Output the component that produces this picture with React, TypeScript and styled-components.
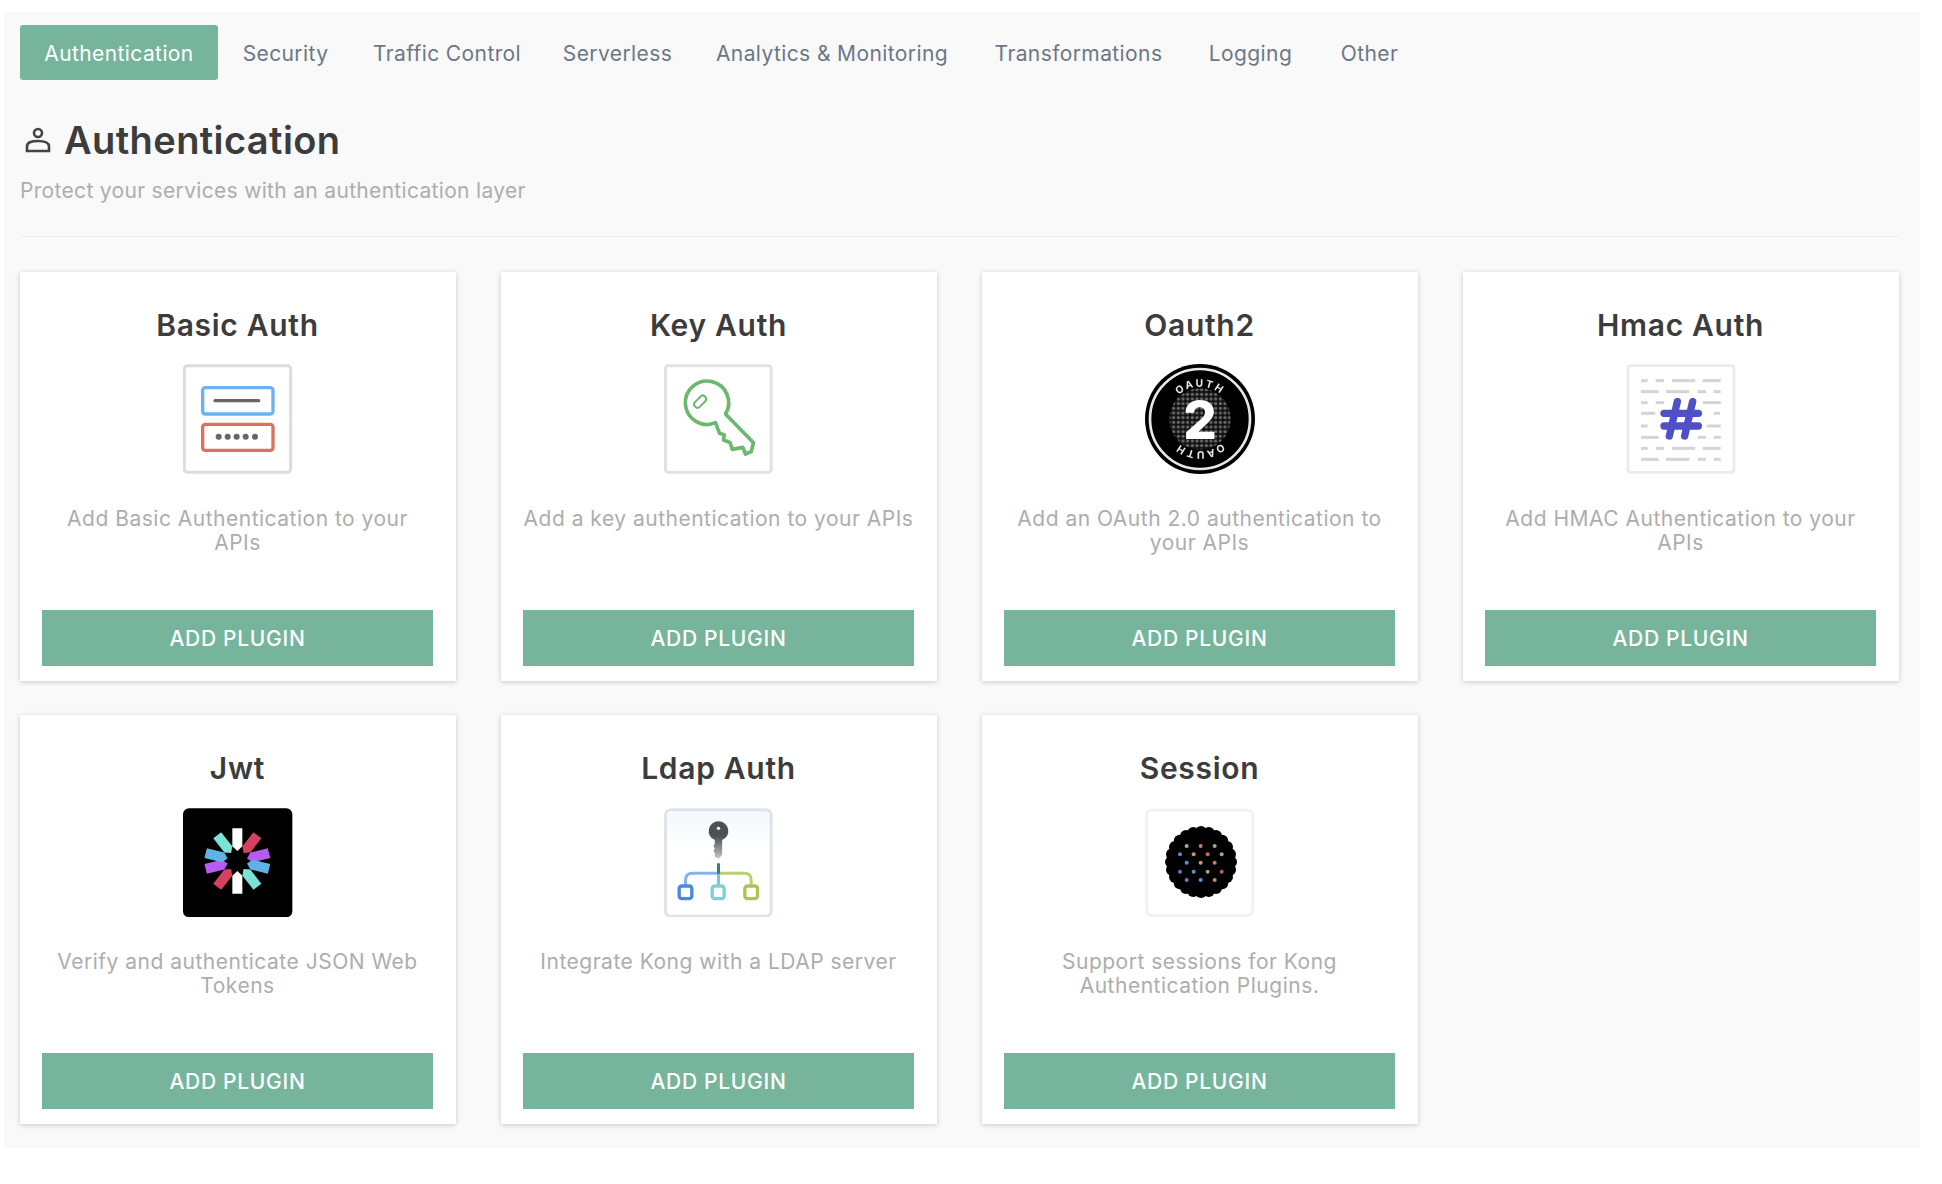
import { ReactNode } from 'react';
import styled, { createGlobalStyle } from 'styled-components';

const GlobalStyle = createGlobalStyle`
  html, body {
    margin: 0;
    background: #fff;
    font-family: Inter, "Liberation Sans", sans-serif;
  }
`;

const tabs = [
  { label: 'Authentication', width: 198 },
  { label: 'Security', width: 127 },
  { label: 'Traffic Control', width: 188 },
  { label: 'Serverless', width: 145 },
  { label: 'Analytics & Monitoring', width: 276 },
  { label: 'Transformations', width: 209 },
  { label: 'Logging', width: 127 },
  { label: 'Other', width: 103 },
];

// icons are drawn in coordinates taken straight off the reference crops
const IconBox = ({ x, y, children }: { x: number; y: number; children: ReactNode }) => (
  <IconSvg viewBox={`${x} ${y} 330 330`}>{children}</IconSvg>
);

const BasicIcon = () => (
  <IconBox x={69} y={42}>
    <rect x="73" y="47" width="319" height="320" rx="10" fill="#fff" stroke="#dcdcdc" strokeWidth="9" />
    <rect x="128" y="113" width="211" height="79" rx="8" fill="#fff" stroke="#6fb1ee" strokeWidth="10" />
    <rect x="128" y="223" width="211" height="78" rx="8" fill="#fff" stroke="#d9735f" strokeWidth="10" />
    <line x1="165" y1="152" x2="296" y2="152" stroke="#666" strokeWidth="10" strokeLinecap="round" />
    {[176, 203, 230, 257, 285].map(cx => <circle key={cx} cx={cx} cy="260" r="9" fill="#666" />)}
  </IconBox>
);

const KeyIcon = () => (
  <IconBox x={73.5} y={42}>
    <rect x="78" y="47" width="317" height="320" rx="8" fill="#fff" stroke="#e2e2e2" strokeWidth="9" />
    <path
      d="M258 192 A65 65 0 1 0 228 218 L240 250 L254 254 L252 270 L272 278 L278 298 L310 292 L318 312 L335 305 L342 278 Z"
      fill="#fff"
      stroke="#6cb86e"
      strokeWidth="11"
      strokeLinejoin="round"
    />
    <rect x="161" y="145" width="42" height="20" rx="9" transform="rotate(-45 182 155)" fill="#fff" stroke="#6cb86e" strokeWidth="6" />
  </IconBox>
);

const OauthIcon = () => (
  <IconBox x={75} y={42}>
    <defs>
      <pattern id="oauthDots" width="14" height="14" patternUnits="userSpaceOnUse">
        <rect width="14" height="14" fill="#111" />
        <circle cx="7" cy="7" r="5" fill="#666" />
      </pattern>
      <path id="oauthArc" d="M143 207 A97 97 0 0 1 337 207" />
    </defs>
    <circle cx="240" cy="207" r="165" fill="#000" />
    <circle cx="240" cy="207" r="150" fill="none" stroke="#e8e8e8" strokeWidth="8" />
    <circle cx="240" cy="207" r="92" fill="url(#oauthDots)" />
    <OauthLabel textAnchor="middle">
      <textPath href="#oauthArc" startOffset="50%">OAUTH</textPath>
    </OauthLabel>
    <OauthLabel textAnchor="middle" transform="rotate(180 240 207)">
      <textPath href="#oauthArc" startOffset="50%">OAUTH</textPath>
    </OauthLabel>
    <OauthTwo x="240" y="268" textAnchor="middle">2</OauthTwo>
  </IconBox>
);

const hmacRows: [number, number[][]][] = [
  [92, [[123, 143], [167, 192], [216, 286], [308, 362]]],
  [125, [[123, 176], [198, 268], [293, 318], [341, 362]]],
  [158, [[123, 143], [167, 192], [308, 362]]],
  [190, [[123, 166], [341, 360]]],
  [228, [[123, 143], [320, 362]]],
  [262, [[123, 176], [293, 318], [341, 362]]],
  [295, [[123, 143], [167, 192], [216, 286], [308, 362]]],
  [328, [[123, 176], [198, 268], [293, 318], [341, 362]]],
];

const HmacIcon = () => (
  <IconBox x={78} y={42}>
    <rect x="84" y="47" width="318" height="320" rx="9" fill="#fff" stroke="#ebebeb" strokeWidth="8" />
    {hmacRows.map(([y, segments]) =>
      segments.map(([a, b]) => <line key={`${y}-${a}`} x1={a} y1={y} x2={b} y2={y} stroke="#d4d4d4" strokeWidth="9" />)
    )}
    <g stroke="#4f4fc6" strokeWidth="22" strokeLinecap="round">
      <line x1="232" y1="155" x2="208" y2="258" />
      <line x1="278" y1="155" x2="254" y2="258" />
      <line x1="192" y1="190" x2="295" y2="190" />
      <line x1="192" y1="228" x2="295" y2="228" />
    </g>
  </IconBox>
);

const jwtSpokes = [
  { angle: 0, color: '#ffffff' },
  { angle: 180, color: '#ffffff' },
  { angle: -38, color: '#7be3d3' },
  { angle: 142, color: '#7be3d3' },
  { angle: 38, color: '#d8405f' },
  { angle: 218, color: '#d8405f' },
  { angle: 76, color: '#b65cf0' },
  { angle: 256, color: '#b65cf0' },
  { angle: 104, color: '#62b1e6' },
  { angle: 284, color: '#62b1e6' },
];

const JwtIcon = () => (
  <IconBox x={69} y={33}>
    <rect x="69" y="37" width="328" height="327" rx="18" fill="#000" />
    {jwtSpokes.map(({ angle, color }) => (
      <polygon key={angle} points="-15,-98 15,-98 15,-44 0,-30 -15,-44" fill={color} transform={`translate(232 195) rotate(${angle})`} />
    ))}
  </IconBox>
);

const LdapIcon = () => (
  <IconBox x={73.5} y={33}>
    <defs>
      <linearGradient id="ldapBg" x1="0" y1="0" x2="0" y2="1">
        <stop offset="0" stopColor="#f4f8fc" />
        <stop offset="0.4" stopColor="#ffffff" />
      </linearGradient>
      <linearGradient id="ldapKey" x1="0" y1="0" x2="0" y2="1">
        <stop offset="0.4" stopColor="#4c5054" />
        <stop offset="1" stopColor="#c4c6c8" />
      </linearGradient>
    </defs>
    <rect x="78" y="41" width="317" height="320" rx="16" fill="url(#ldapBg)" stroke="#dfe4ea" strokeWidth="9" />
    <path
      d="M237 76 A29 29 0 0 1 248 132 V176 L238 188 L226 182 V172 L222 164 L226 158 L222 150 L226 142 V132 A29 29 0 0 1 237 76 Z"
      fill="url(#ldapKey)"
    />
    <circle cx="237" cy="97" r="5" fill="#fff" />
    <path d="M237 232 H160 Q138 232 138 252 V270" fill="none" stroke="#86b4ea" strokeWidth="9" />
    <path d="M237 232 H314 Q335 232 335 252 V270" fill="none" stroke="#b7d172" strokeWidth="9" />
    <line x1="237" y1="232" x2="237" y2="270" stroke="#79c9d4" strokeWidth="9" />
    <line x1="237" y1="202" x2="237" y2="234" stroke="#3f7b86" strokeWidth="9" />
    <rect x="119" y="270" width="38" height="38" rx="8" fill="#fff" stroke="#4b88e2" strokeWidth="10" />
    <rect x="218" y="270" width="36" height="38" rx="8" fill="#fff" stroke="#7dd0d8" strokeWidth="10" />
    <rect x="316" y="270" width="38" height="38" rx="8" fill="#fff" stroke="#a9c558" strokeWidth="10" />
  </IconBox>
);

const sessionDots: [number, number, string][] = [
  [200, 150, '#b8a97c'], [242, 150, '#c08270'], [284, 150, '#9cab82'],
  [180, 175, '#5a8ac2'], [221, 175, '#b2a272'], [263, 175, '#c26c72'], [305, 175, '#a2aa82'],
  [200, 200, '#5a90d2'], [242, 200, '#c2a262'], [284, 200, '#d27272'],
  [180, 227, '#7a72b2'], [221, 227, '#5a90d2'], [263, 227, '#b2a262'], [305, 227, '#b26272'],
  [200, 252, '#8272b2'], [242, 252, '#5a90e2'], [284, 252, '#c29252'],
];

const scallops = Array.from({ length: 24 }, (_, i) => (i * Math.PI) / 12);

const SessionIcon = () => (
  <IconBox x={75} y={33}>
    <rect x="80" y="42" width="318" height="317" rx="16" fill="#fff" stroke="#eff1f5" strokeWidth="8" />
    <circle cx="243" cy="198" r="98" fill="#000" />
    {scallops.map(a => (
      <circle key={a} cx={243 + 90 * Math.cos(a)} cy={198 + 90 * Math.sin(a)} r="18" fill="#000" />
    ))}
    {sessionDots.map(([cx, cy, fill]) => <circle key={`${cx}-${cy}`} cx={cx} cy={cy} r="6" fill={fill} />)}
  </IconBox>
);

const plugins = [
  { title: 'Basic Auth', icon: <BasicIcon />, text: 'Add Basic Authentication to your APIs' },
  { title: 'Key Auth', icon: <KeyIcon />, text: 'Add a key authentication to your APIs' },
  { title: 'Oauth2', icon: <OauthIcon />, text: 'Add an OAuth 2.0 authentication to your APIs' },
  { title: 'Hmac Auth', icon: <HmacIcon />, text: 'Add HMAC Authentication to your APIs' },
  { title: 'Jwt', icon: <JwtIcon />, text: 'Verify and authenticate JSON Web Tokens' },
  { title: 'Ldap Auth', icon: <LdapIcon />, text: 'Integrate Kong with a LDAP server' },
  { title: 'Session', icon: <SessionIcon />, text: 'Support sessions for Kong Authentication Plugins.' },
];

const App = () => (
  <>
    <GlobalStyle />
    <Panel>
      <TabBar>
        {tabs.map((tab, i) => (
          <Tab key={tab.label} $active={i === 0} $width={tab.width}>{tab.label}</Tab>
        ))}
      </TabBar>
      <Heading>
        <PersonIcon viewBox="0 0 26 26" fill="none" stroke="#444" strokeWidth="2.6">
          <circle cx="13" cy="6" r="4" />
          <path d="M2 24 V19.5 C2 15.5 6 14 13 14 C20 14 24 15.5 24 19.5 V24 Z" />
        </PersonIcon>
        Authentication
      </Heading>
      <Subtitle>Protect your services with an authentication layer</Subtitle>
      <Divider />
      <CardGrid>
        {plugins.map(plugin => (
          <Card key={plugin.title}>
            <CardTitle>{plugin.title}</CardTitle>
            {plugin.icon}
            <CardText>{plugin.text}</CardText>
            <AddButton>ADD PLUGIN</AddButton>
          </Card>
        ))}
      </CardGrid>
    </Panel>
  </>
);

const Panel = styled.div`
  box-sizing: border-box;
  width: 1916px;
  margin: 12px 0 37px 4px;
  padding: 13px 21px 24px 16px;
  background: #f9f9f9;
`;

const TabBar = styled.div`
  display: flex;
  gap: 4px;
`;

const Tab = styled.div<{ $active?: boolean; $width: number }>`
  box-sizing: border-box;
  width: ${p => p.$width}px;
  height: 55px;
  padding-top: 2px;
  display: flex;
  align-items: center;
  justify-content: center;
  white-space: nowrap;
  border-radius: 3px;
  font-size: 21px;
  letter-spacing: 0.4px;
  color: ${p => (p.$active ? '#fff' : '#6b7788')};
  background: ${p => (p.$active ? '#76b49c' : 'transparent')};
`;

const Heading = styled.h1`
  display: flex;
  align-items: center;
  margin: 38px 0 0;
  height: 44px;
  font-size: 38px;
  font-weight: 600;
  letter-spacing: 0.4px;
  color: #3c3c3c;
`;

const PersonIcon = styled.svg`
  width: 26px;
  height: 26px;
  margin: 0 13px 0 5px;
`;

const Subtitle = styled.p`
  margin: 16px 0 0;
  line-height: 26px;
  font-size: 21px;
  letter-spacing: 0.32px;
  color: #adadad;
`;

const Divider = styled.hr`
  margin: 32px 0 35px;
  border: 0;
  border-top: 1px solid #eeeeee;
`;

const CardGrid = styled.div`
  display: grid;
  grid-template-columns: repeat(4, 436px);
  column-gap: 45px;
  row-gap: 34px;
`;

const Card = styled.div`
  box-sizing: border-box;
  height: 409px;
  padding: 35px 23px 15px 22px;
  display: flex;
  flex-direction: column;
  align-items: center;
  background: #fff;
  box-shadow: 0 1px 5px rgba(0, 0, 0, 0.2);
`;

const CardTitle = styled.h3`
  margin: 0 0 21px;
  line-height: 36px;
  font-size: 30px;
  font-weight: 600;
  letter-spacing: 0.7px;
  color: #3c3c3c;
`;

const IconSvg = styled.svg`
  width: 110px;
  height: 110px;
  flex: none;
  filter: blur(0.5px);
`;

const OauthLabel = styled.text`
  font-family: Inter, sans-serif;
  font-size: 31px;
  font-weight: 700;
  letter-spacing: 6px;
  fill: #e8e8e8;
`;

const OauthTwo = styled.text`
  font-family: Inter, sans-serif;
  font-size: 158px;
  font-weight: 800;
  fill: #fff;
`;

const CardText = styled.p`
  margin: 33px 0 0;
  max-width: 390px;
  line-height: 24px;
  font-size: 21px;
  letter-spacing: 0.5px;
  text-align: center;
  color: #adadad;
`;

const AddButton = styled.button`
  margin-top: auto;
  width: 100%;
  height: 56px;
  border: 0;
  padding: 0;
  font-family: inherit;
  font-size: 21px;
  font-weight: 500;
  letter-spacing: 0.7px;
  color: #fff;
  background: #76b49c;
`;

export default App;
